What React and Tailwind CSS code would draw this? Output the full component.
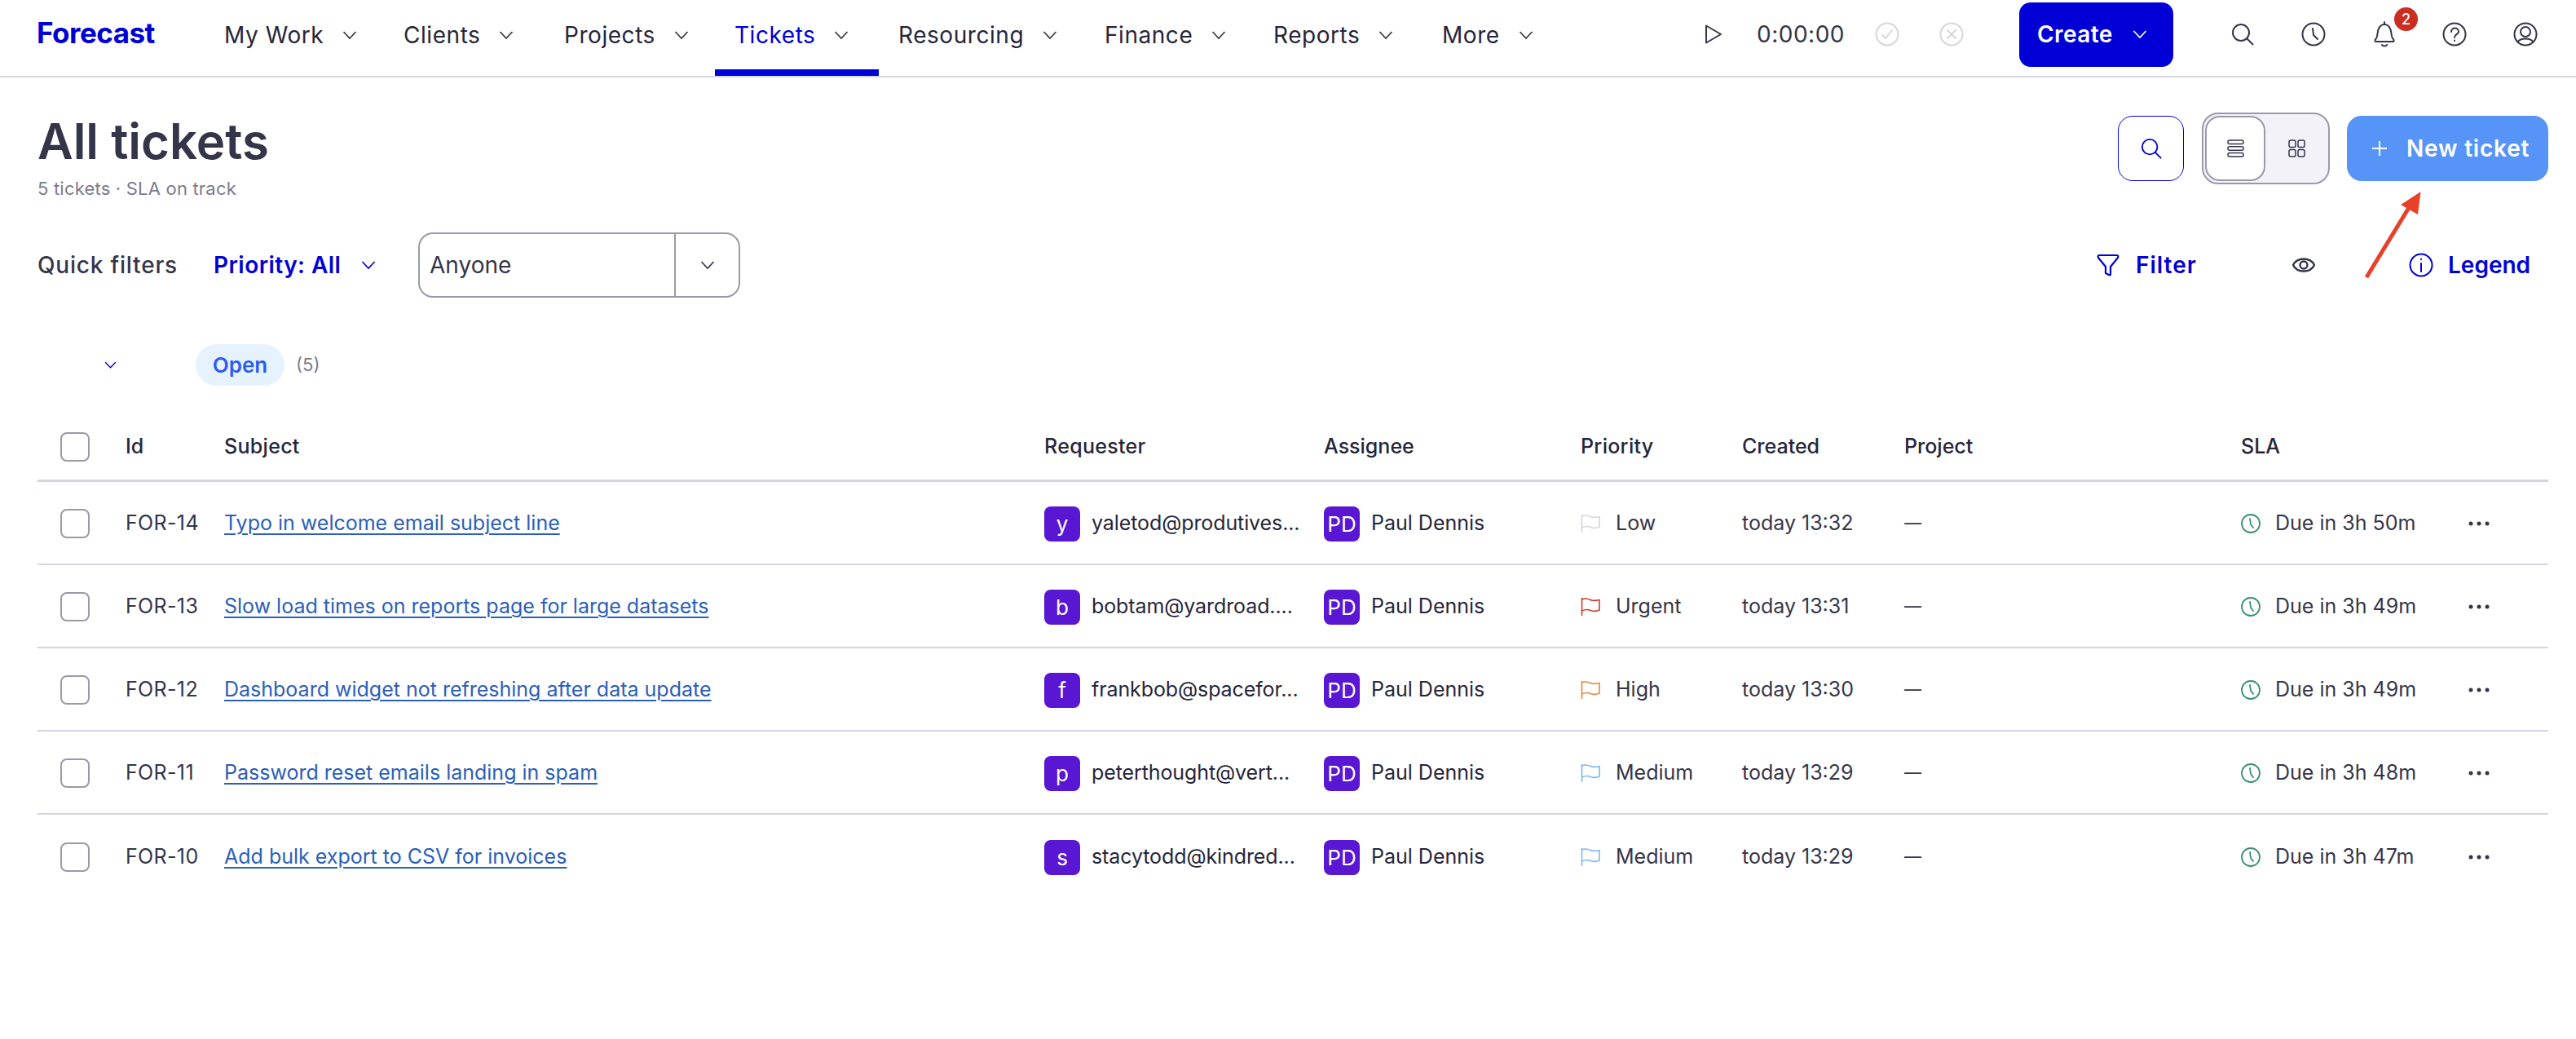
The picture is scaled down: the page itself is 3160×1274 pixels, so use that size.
const navItems = [
  { label: 'My Work', width: 'w-[220px]' },
  { label: 'Clients', width: 'w-[197px]' },
  { label: 'Projects', width: 'w-[209px]' },
  { label: 'Tickets', width: 'w-[201px]', active: true },
  { label: 'Resourcing', width: 'w-[253px]' },
  { label: 'Finance', width: 'w-[207px]' },
  { label: 'Reports', width: 'w-[207px]' },
  { label: 'More', width: 'w-[207px]' },
]

const tickets = [
  { id: 'FOR-14', subject: 'Typo in welcome email subject line', initial: 'y', email: 'yaletod@produtives...', priority: 'Low', flag: '#d5d4e0', created: 'today 13:32', due: 'Due in 3h 50m' },
  { id: 'FOR-13', subject: 'Slow load times on reports page for large datasets', initial: 'b', email: 'bobtam@yardroad....', priority: 'Urgent', flag: '#cf3a2b', created: 'today 13:31', due: 'Due in 3h 49m' },
  { id: 'FOR-12', subject: 'Dashboard widget not refreshing after data update', initial: 'f', email: 'frankbob@spacefor...', priority: 'High', flag: '#e08a3c', created: 'today 13:30', due: 'Due in 3h 49m' },
  { id: 'FOR-11', subject: 'Password reset emails landing in spam', initial: 'p', email: 'peterthought@vert...', priority: 'Medium', flag: '#7fb4f5', created: 'today 13:29', due: 'Due in 3h 48m' },
  { id: 'FOR-10', subject: 'Add bulk export to CSV for invoices', initial: 's', email: 'stacytodd@kindred...', priority: 'Medium', flag: '#7fb4f5', created: 'today 13:29', due: 'Due in 3h 47m' },
]

const columns = 'grid grid-cols-[80px_121px_1006px_343px_315px_198px_199px_413px_279px_98px] pl-[28px] items-center'

function Chevron({ className = '', size = 18, color = 'currentColor' }) {
  return (
    <svg width={size} height={size} viewBox="0 0 18 18" fill="none" stroke={color} strokeWidth="1.7" className={className}>
      <path d="M1.5 5 L9 13 L16.5 5" />
    </svg>
  )
}

function SearchIcon({ size = 28, color = '#35354a' }) {
  return (
    <svg width={size} height={size} viewBox="0 0 28 28" fill="none" stroke={color} strokeWidth="2">
      <circle cx="12" cy="12" r="10" />
      <path d="M19 19 L27 27" />
    </svg>
  )
}

function Ring({ color = '#35354a', children }) {
  return (
    <svg width="30" height="30" viewBox="0 0 30 30" fill="none" stroke={color} strokeWidth="2" strokeLinecap="round" strokeLinejoin="round">
      <circle cx="15" cy="15" r="13.5" />
      {children}
    </svg>
  )
}

function Flag({ color }) {
  return (
    <svg width="24" height="22" viewBox="0 0 24 22" fill="none" stroke={color} strokeWidth="1.6" strokeLinejoin="round">
      <path d="M1.5 0 V22" />
      <path d="M1.5 2 C6 0 9 1 12 2.5 C15 4 19 3.5 23 2.5 V15 C19 17 15 16.5 12 15.5 C9 14 6 14 1.5 16" />
    </svg>
  )
}

function Avatar({ children }) {
  return (
    <span className="w-[44px] h-[43px] shrink-0 rounded-[8px] bg-[#5a17d3] text-white text-[26px] flex items-center justify-center">
      {children}
    </span>
  )
}

function TopBar() {
  return (
    <header className="h-[95px] border-b-2 border-[#d5d4e0] flex">
      <div className="w-[251px] pl-[45px] pt-[20px] text-[35px] leading-[40px] font-bold text-[#0000d6] tracking-[-0.5px]">Forecast</div>
      <nav className="flex">
        {navItems.map(item => (
          <div
            key={item.label}
            className={`${item.width} relative h-[93px] flex items-center pl-[24px] pb-[7px] text-[28px] tracking-[0.55px] ${item.active ? 'text-[#0000d6]' : 'text-[#26263a]'}`}
          >
            <span>{item.label}</span>
            <Chevron className="ml-[23px] text-[#35354a]" />
            {item.active && <span className="absolute left-0 right-0 bottom-0 h-[8px] bg-[#0000d6]" />}
          </div>
        ))}
      </nav>
      <div className="ml-auto flex items-center pr-[47px] pb-[9px]">
        <svg width="22" height="24" viewBox="0 0 22 24" fill="none" stroke="#35354a" strokeWidth="2" strokeLinejoin="round">
          <path d="M2 1.5 L20 12 L2 22.5 Z" />
        </svg>
        <span className="ml-[42px] w-[105px] text-[28px] tracking-[0.5px] text-[#35354a] whitespace-nowrap">0:00:00</span>
        <div className="ml-[40px]">
          <Ring color="#d5d4e0"><path d="M9 16 L13 20 L21 10" /></Ring>
        </div>
        <div className="ml-[49px]">
          <Ring color="#d5d4e0"><path d="M10 10 L20 20 M20 10 L10 20" /></Ring>
        </div>
        <button className="ml-[68px] w-[189px] h-[79px] rounded-[14px] bg-[#0000d6] text-white text-[28px] font-semibold tracking-[0.4px] flex items-center pl-[22px]">
          Create
          <Chevron className="ml-[24px]" />
        </button>
        <div className="ml-[70px] w-[30px] flex justify-center"><SearchIcon /></div>
        <div className="ml-[57px]">
          <Ring><path d="M14 8 L15 16 L20 21" /></Ring>
        </div>
        <div className="ml-[57px] relative w-[30px] flex justify-center">
          <svg width="26" height="32" viewBox="0 0 26 32" fill="none" stroke="#35354a" strokeWidth="2" strokeLinejoin="round" strokeLinecap="round">
            <path d="M13 1 V3 M2 25 C1 24 1 23 3 21 C5 18 4 13 6 9 C8 5 11 4 13 4 C15 4 18 5 20 9 C22 13 21 18 23 21 C25 23 25 24 24 25 Z" />
            <path d="M10 29 C11 31 15 31 16 29" />
          </svg>
          <span className="absolute left-[27px] -top-[17px] w-[29px] h-[29px] rounded-full bg-[#cb2d1f] text-white text-[18px] font-medium flex items-center justify-center">2</span>
        </div>
        <div className="ml-[56px]">
          <Ring>
            <path d="M11 12 C11 6 20 6 20 12 C20 15 15 15 15 19" />
            <path d="M15 22.5 V23" />
          </Ring>
        </div>
        <div className="ml-[57px]">
          <Ring>
            <circle cx="15" cy="12" r="6" />
            <path d="M5.5 24.5 C8 19 22 19 24.5 24.5" />
          </Ring>
        </div>
      </div>
    </header>
  )
}

function PageHead() {
  return (
    <div className="h-[147px] flex items-start">
      <div>
        <h1 className="text-[60px] leading-[70px] font-semibold text-[#35354a]">All tickets</h1>
        <p className="mt-[13px] text-[22px] leading-[20px] tracking-[0.2px] text-[#7b7b8c]">5 tickets · SLA on track</p>
      </div>
      <div className="ml-auto flex items-center h-[88px]">
        <button className="w-[81px] h-[80px] rounded-[18px] border-[1.5px] border-[#0000d6] flex items-center justify-center">
          <SearchIcon size={26} color="#0000d6" />
        </button>
        <div className="ml-[22px] w-[157px] h-[88px] rounded-[20px] border-2 border-[#9a9aa8] bg-[#f3f2f9] flex items-center pl-[2px]">
          <div className="w-[74px] h-[80px] rounded-[18px] border-2 border-[#9a9aa8] bg-white flex items-center justify-center">
            <svg width="21" height="22" viewBox="0 0 21 22" fill="none" stroke="#35354a" strokeWidth="1.5">
              <rect x="1" y="1" width="19" height="4.6" rx="2" />
              <rect x="1" y="8.7" width="19" height="4.6" rx="2" />
              <rect x="1" y="16.4" width="19" height="4.6" rx="2" />
            </svg>
          </div>
          <div className="flex-1 flex items-center justify-center">
            <svg width="21" height="22" viewBox="0 0 21 22" fill="none" stroke="#35354a" strokeWidth="1.5">
              <rect x="1" y="1" width="8" height="8.6" rx="2" />
              <rect x="12" y="1" width="8" height="8.6" rx="2" />
              <rect x="1" y="12.4" width="8" height="8.6" rx="2" />
              <rect x="12" y="12.4" width="8" height="8.6" rx="2" />
            </svg>
          </div>
        </div>
        <button className="ml-[21px] w-[247px] h-[80px] rounded-[18px] bg-[#5794f7] text-white text-[28px] font-semibold tracking-[0.8px] flex items-center pl-[31px]">
          <svg width="18" height="18" viewBox="0 0 18 18" stroke="currentColor" strokeWidth="2"><path d="M9 0 V18 M0 9 H18" /></svg>
          <span className="ml-[24px]">New ticket</span>
        </button>
      </div>
    </div>
  )
}

function QuickFilters() {
  return (
    <div className="h-[80px] flex items-center">
      <span className="w-[216px] text-[28px] font-medium tracking-[0.8px] text-[#35354a] whitespace-nowrap">Quick filters</span>
      <span className="w-[181px] text-[28px] font-semibold tracking-[0.45px] text-[#0000d6] whitespace-nowrap">Priority: All</span>
      <Chevron className="text-[#0000d6]" />
      <div className="ml-[52px] w-[395px] h-[80px] rounded-[18px] border-2 border-[#9a9aa8] flex items-center">
        <span className="w-[314px] pl-[12px] text-[28px] text-[#35354a]">Anyone</span>
        <span className="w-[79px] h-full border-l-2 border-[#9a9aa8] flex items-center justify-center">
          <Chevron className="text-[#35354a]" />
        </span>
      </div>
      <div className="ml-auto flex items-center pr-[21px] text-[#0000d6] text-[28px] font-semibold">
        <svg width="28" height="28" viewBox="0 0 28 28" fill="none" stroke="currentColor" strokeWidth="2.2" strokeLinejoin="round">
          <path d="M3 2 H25 Q27 2 26 5 L17 16 V25 Q17 27 15 26 L11 24 V16 L2 5 Q1 2 3 2 Z" />
        </svg>
        <span className="ml-[20px] w-[75px] tracking-[1px]">Filter</span>
        <svg className="ml-[117px]" width="28" height="24" viewBox="0 0 28 24" fill="none" stroke="#35354a" strokeWidth="2.4">
          <path d="M1 12 C6 2 22 2 27 12 C22 22 6 22 1 12 Z" />
          <circle cx="14" cy="12" r="4.5" />
        </svg>
        <span className="ml-[115px]">
          <Ring color="#0000d6"><path d="M15 13 V23 M15 7.5 V8" /></Ring>
        </span>
        <span className="ml-[18px] w-[102px]">Legend</span>
      </div>
    </div>
  )
}

function TicketRow({ ticket, last }) {
  return (
    <div className={`${columns} h-[102px] pt-[2px] text-[25px] text-[#35354a] ${last ? '' : 'border-b-2 border-[#d5d4e0]'}`}>
      <span className="w-[36px] h-[36px] rounded-[8px] border-2 border-[#9a9aa8]" />
      <span className="tracking-[0.35px]">{ticket.id}</span>
      <a className="text-[#2b5fb8] underline underline-offset-[4px] decoration-2 whitespace-nowrap">{ticket.subject}</a>
      <div className="flex items-center">
        <Avatar>{ticket.initial}</Avatar>
        <span className="ml-[14px] whitespace-nowrap tracking-[-0.1px] text-[#26263a]">{ticket.email}</span>
      </div>
      <div className="flex items-center">
        <Avatar>PD</Avatar>
        <span className="ml-[14px] whitespace-nowrap text-[#26263a]">Paul Dennis</span>
      </div>
      <div className="flex items-center">
        <Flag color={ticket.flag} />
        <span className="ml-[19px]">{ticket.priority}</span>
      </div>
      <span className="whitespace-nowrap">{ticket.created}</span>
      <span className="text-[21px]">—</span>
      <div className="flex items-center">
        <svg width="24" height="24" viewBox="0 0 24 24" fill="none" stroke="#36906f" strokeWidth="1.8" strokeLinecap="round">
          <circle cx="12" cy="12" r="11" />
          <path d="M11 6 L12 13 L15 17" />
        </svg>
        <span className="ml-[18px] whitespace-nowrap">{ticket.due}</span>
      </div>
      <svg width="26" height="6" viewBox="0 0 26 6" fill="#35354a">
        <circle cx="3" cy="3" r="2.5" />
        <circle cx="13" cy="3" r="2.5" />
        <circle cx="23" cy="3" r="2.5" />
      </svg>
    </div>
  )
}

export default function App() {
  return (
    <div className="relative min-h-[1274px] bg-white font-['Inter',sans-serif] overflow-hidden">
      <TopBar />
      <main className="pl-[46px] pr-[34px] pt-[43px]">
        <PageHead />
        <QuickFilters />

        <div className="mt-[57px] h-[51px] flex items-center">
          <Chevron size={15} className="ml-[82px] text-[#0000d6]" />
          <span className="ml-[97px] h-[51px] w-[109px] rounded-full bg-[#e6f3fe] text-[#2d5cf0] text-[26px] font-semibold flex items-center justify-center">Open</span>
          <span className="ml-[14px] text-[22px] text-[#7b7b8c]">(5)</span>
        </div>

        <div className={`${columns} mt-[33px] h-[85px] pt-[2px] border-b-[3px] border-[#d5d4e0] text-[25px] font-medium text-[#26263a]`}>
          <span className="w-[36px] h-[36px] rounded-[8px] border-2 border-[#9a9aa8]" />
          <span>Id</span>
          <span className="tracking-[0.3px]">Subject</span>
          <span className="tracking-[0.3px]">Requester</span>
          <span>Assignee</span>
          <span className="tracking-[0.3px]">Priority</span>
          <span>Created</span>
          <span>Project</span>
          <span>SLA</span>
          <span />
        </div>

        {tickets.map((ticket, i) => (
          <TicketRow key={ticket.id} ticket={ticket} last={i === tickets.length - 1} />
        ))}
      </main>

      {/* Annotation arrow over the toolbar */}
      <svg className="absolute left-[2890px] top-[225px]" width="90" height="125" viewBox="0 0 90 125" fill="none">
        <path d="M13 115 L66 28" stroke="#e8412a" strokeWidth="5" />
        <path d="M79.5 10 L55 26 L76 38 Z" fill="#e8412a" />
      </svg>
    </div>
  )
}
